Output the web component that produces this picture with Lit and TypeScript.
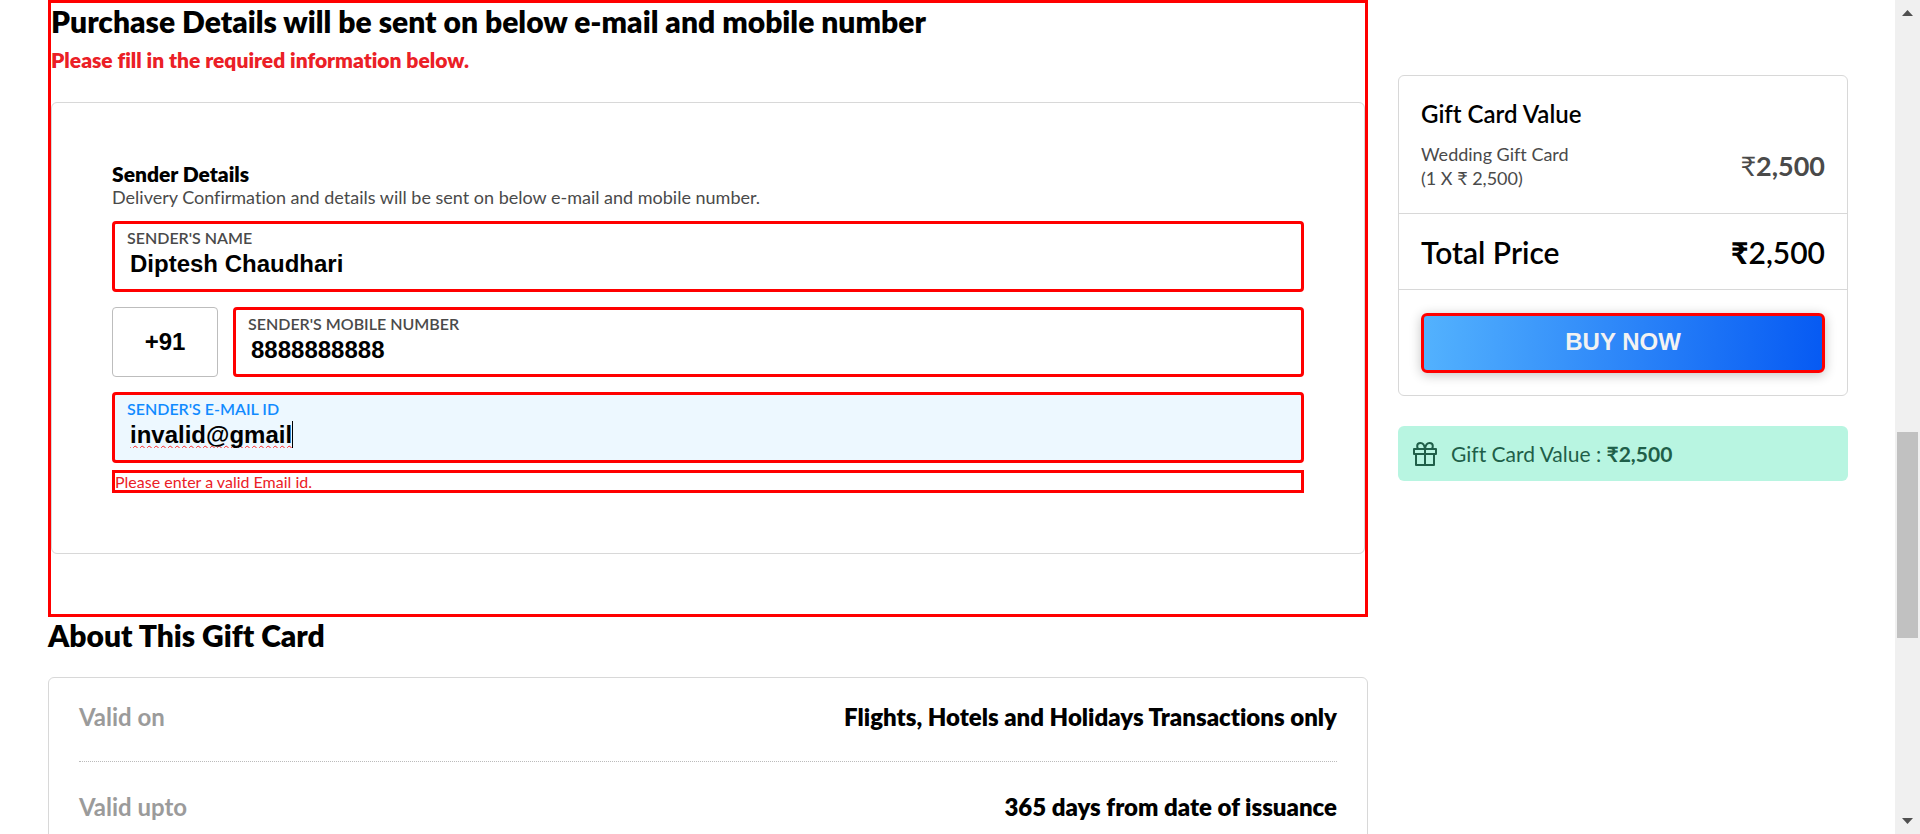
import { LitElement, html, css } from "lit";
import { customElement, property } from "lit/decorators.js";
import { classMap } from "lit/directives/class-map.js";

@customElement("text-field")
class TextField extends LitElement {
  @property() label = "";
  @property() value = "";
  @property() type = "text";
  @property({ type: Boolean }) active = false;

  static styles = css`
    :host { display: block; }
    .field {
      box-sizing: border-box;
      height: 100%;
      min-height: 70px;
      border: 3px solid #f00;
      border-radius: 4px;
      padding: 3px 12px;
      background: #fff;
      color: #4a4a4a;
    }
    .field.active { background: #edf8ff; color: #118bff; }
    label { display: block; font-size: 16px; line-height: 22px; font-weight: 600; }
    .line { display: flex; align-items: center; height: 29px; padding-left: 3px; }
    input {
      flex: 1;
      min-width: 0;
      border: 0;
      padding: 0;
      outline: 0;
      background: none;
      color: #000;
      font: bold 24px/27px "Liberation Sans", Arial, sans-serif;
    }
    .active input {
      flex: none;
      field-sizing: content;
      text-decoration: underline wavy #f22 1px;
      text-decoration-skip-ink: none;
      text-underline-offset: 2px;
    }
    .caret { width: 1px; height: 27px; background: #000; }
  `;

  render() {
    return html`
      <div class=${classMap({ field: true, active: this.active })}>
        <label for="control">${this.label}</label>
        <div class="line">
          <input id="control" type=${this.type} .value=${this.value} />
          ${this.active ? html`<span class="caret"></span>` : ""}
        </div>
      </div>
    `;
  }
}

@customElement("app-root")
class AppRoot extends LitElement {
  private facts = [
    ["Valid on", "Flights, Hotels and Holidays Transactions only"],
    ["Valid upto", "365 days from date of issuance"],
  ];

  static styles = css`
    :host {
      display: flex;
      height: 100vh;
      overflow: hidden;
      background: #fff;
      color: #000;
      font-family: Lato, "Liberation Sans", sans-serif;
      font-variant-ligatures: no-common-ligatures;
    }
    h1, h2, h3, p, dl, dd { margin: 0; }
    .page {
      flex: 1;
      min-width: 0;
      display: grid;
      grid-template-columns: minmax(0, 1fr) 450px;
      align-items: start;
      gap: 30px;
      padding: 0 47px 0 48px;
    }
    .purchase { border: 3px solid #f00; padding-bottom: 60px; }
    .title { font-size: 30px; line-height: 36px; font-weight: 800; }
    .warning { margin: 6px 0 28px; font-size: 21px; line-height: 29px; font-weight: 800; color: #eb2026; }
    .card { border: 1px solid #d8d8d8; border-radius: 6px; }
    .form { padding: 59px 60px 60px; }
    .form h2 { font-size: 21px; line-height: 24px; font-weight: 800; }
    .hint { margin-bottom: 13px; font-size: 18px; line-height: 22px; color: #4a4a4a; }
    .fields { display: grid; grid-template-rows: 71px 70px 71px; gap: 15px; }
    .phone { display: grid; grid-template-columns: 106px minmax(0, 1fr); gap: 15px; }
    .code {
      box-sizing: border-box;
      width: 100%;
      height: 100%;
      border: 1px solid #bdbdbd;
      border-radius: 4px;
      padding: 0;
      text-align: center;
      color: #000;
      font: bold 24px "Liberation Sans", Arial, sans-serif;
    }
    .error { margin-top: 7px; border: 3px solid #f00; font-size: 16px; line-height: 17px; color: #eb2026; }
    .about { padding-bottom: 24px; }
    .facts { padding: 0 30px; }
    .fact { display: flex; justify-content: space-between; padding: 24px 0 29px; font-size: 24px; line-height: 30px; font-weight: 800; }
    .fact + .fact { border-top: 1px dotted #bbb; padding-top: 30px; }
    .fact dt { color: #9b9b9b; font-weight: 700; }
    .side { display: grid; gap: 30px; padding-top: 75px; }
    .row { display: flex; justify-content: space-between; align-items: center; }
    .item { padding: 22px 22px 23px; border-bottom: 1px solid #d8d8d8; }
    .item h2 { font-size: 24px; line-height: 32px; font-weight: 600; }
    .item .row { margin-top: 12px; font-size: 18px; line-height: 24px; color: #4a4a4a; }
    .amount { font-size: 27px; font-weight: 700; }
    .amount .sign { font-weight: 400; }
    .total { padding: 20px 22px 19px; border-bottom: 1px solid #d8d8d8; font-size: 30px; line-height: 36px; font-weight: 600; }
    .total .sign { font-weight: 900; }
    .action { padding: 23px 22px 22px; }
    button {
      display: block;
      width: 100%;
      height: 60px;
      border: 3px solid #f00;
      border-radius: 6px;
      padding: 0 0 2px;
      background: linear-gradient(93deg, #53b2fe, #065af3);
      box-shadow: 0 2px 12px rgba(0, 0, 0, 0.24);
      color: #f2f2f2;
      font: bold 24px "Liberation Sans", Arial, sans-serif;
    }
    .badge {
      display: flex;
      align-items: center;
      gap: 14px;
      height: 55px;
      padding: 0 15px;
      border-radius: 6px;
      background: #b8f5e1;
      color: #1f5f49;
      font-size: 21px;
    }
    .badge strong { font-weight: 700; }
    .badge svg { width: 24px; height: 24px; fill: none; stroke: currentColor; stroke-width: 2; stroke-linejoin: round; }
    .scroll {
      flex: none;
      width: 25px;
      box-sizing: border-box;
      display: flex;
      flex-direction: column;
      align-items: center;
      padding: 10px 0;
      background: #f0f0f0;
    }
    .scroll svg { width: 11px; height: 6px; fill: #505050; }
    .track { flex: 1; display: grid; grid-template-rows: 416fr 206fr 180fr; }
    .thumb { grid-row: 2; width: 21px; background: #c1c1c1; }
  `;

  render() {
    return html`
      <main class="page">
        <div>
          <section class="purchase">
            <h1 class="title">Purchase Details will be sent on below e-mail and mobile number</h1>
            <p class="warning">Please fill in the required information below.</p>
            <form class="card form">
              <h2>Sender Details</h2>
              <p class="hint">Delivery Confirmation and details will be sent on below e-mail and mobile number.</p>
              <div class="fields">
                <text-field label="SENDER'S NAME" value="Diptesh Chaudhari"></text-field>
                <div class="phone">
                  <input class="code" aria-label="Country code" value="+91" />
                  <text-field label="SENDER'S MOBILE NUMBER" type="tel" value="8888888888"></text-field>
                </div>
                <text-field label="SENDER'S E-MAIL ID" value="invalid@gmail" active></text-field>
              </div>
              <p class="error" role="alert">Please enter a valid Email id.</p>
            </form>
          </section>
          <section>
            <h2 class="title about">About This Gift Card</h2>
            <dl class="card facts">
              ${this.facts.map(([name, text]) => html`<div class="fact"><dt>${name}</dt><dd>${text}</dd></div>`)}
            </dl>
          </section>
        </div>
        <aside class="side">
          <div class="card">
            <div class="item">
              <h2>Gift Card Value</h2>
              <div class="row">
                <p>Wedding Gift Card<br />(1 X ₹ 2,500)</p>
                <span class="amount"><span class="sign">₹</span>2,500</span>
              </div>
            </div>
            <div class="row total"><span>Total Price</span><span><span class="sign">₹</span>2,500</span></div>
            <div class="action"><button type="button">BUY NOW</button></div>
          </div>
          <div class="badge">
            <svg viewBox="0 0 24 24" aria-hidden="true">
              <path d="M1 7h22v5H1zM3 12v11h18V12M12 7v16M12 7C11.500 3 9.800 1 7.500 1C5.500 1 4.200 2.300 4.200 4C4.200 5.500 5 7 6 7M12 7C12.500 3 14.200 1 16.500 1C18.500 1 19.800 2.300 19.800 4C19.800 5.500 19 7 18 7" />
            </svg>
            <span>Gift Card Value : <strong>₹2,500</strong></span>
          </div>
        </aside>
      </main>
      <div class="scroll" aria-hidden="true">
        <svg viewBox="0 0 11 6"><path d="M0 6L5.500 0L11 6z" /></svg>
        <div class="track"><div class="thumb"></div></div>
        <svg viewBox="0 0 11 6"><path d="M0 0L5.500 6L11 0z" /></svg>
      </div>
    `;
  }
}
